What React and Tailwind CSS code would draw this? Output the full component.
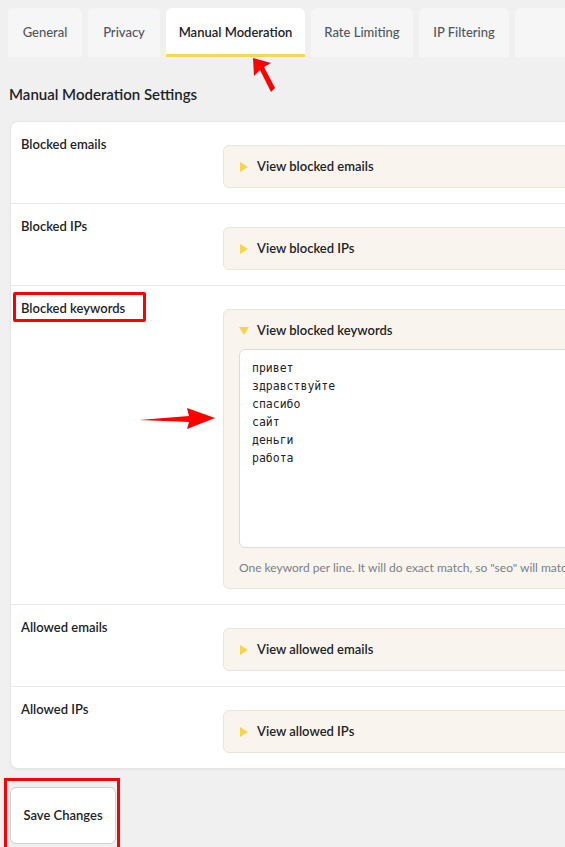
import React from "react";

const tabs = [
    { label: "General", w: "w-[74px]" },
    { label: "Privacy", w: "w-[72px]" },
    { label: "Manual Moderation", w: "w-[139px]", active: true },
    { label: "Rate Limiting", w: "w-[102px]" },
    { label: "IP Filtering", w: "w-[90px]" },
];

const keywords = ["привет", "здравствуйте", "спасибо", "сайт", "деньги", "работа"];

function Triangle({ open }) {
    return (
        <svg width="10" height="10" viewBox="0 0 10 10" className="shrink-0">
            {open ? <path d="M0 1 L10 1 L5 9 Z" fill="#f7d44c" /> : <path d="M1 0 L9 5 L1 10 Z" fill="#f7d44c" />}
        </svg>
    );
}

function Row({ label, summary, open, highlight, last, children }) {
    return (
        <div className={`flex ${last ? "" : "border-b border-[#e8e8e8]"}`}>
            <div className="w-[212px] shrink-0 pl-[10px] pt-[9px]">
                <span className="relative inline-block text-[13px] font-semibold text-[#1d2327]">
                    {label}
                    {highlight && (
                        <span className="absolute -left-[8px] -top-[7px] w-[133px] h-[30px] border-[3px] border-[#ff0000] rounded-[2px]"></span>
                    )}
                </span>
            </div>
            <div className="flex-1 pt-[23px] pb-[15px] pr-[10px]">
                <div className="bg-[#f9f5ee] border border-[#ebe5d9] rounded-[6px]">
                    <div className="flex items-center gap-[8px] pl-[15px] h-[41px] text-[13px] font-semibold text-[#1d2327]">
                        <Triangle open={open} />
                        <span>{summary}</span>
                    </div>
                    {children}
                </div>
            </div>
        </div>
    );
}

export default function App() {
    return (
        <div className="w-[565px] min-h-[847px] overflow-hidden bg-[#f0f0f1] relative" style={{ fontFamily: "Lato, 'Noto Sans', sans-serif" }}>
            <div className="w-[900px] pl-[8px] pt-[8px]">
                {/* Tabs */}
                <div className="flex gap-[6px]">
                    {tabs.map((t) => (
                        <div
                            key={t.label}
                            className={`${t.w} h-[49px] flex items-center justify-center rounded-t-[6px] text-[13px] ${
                                t.active
                                    ? "bg-white text-[#1d2327] font-semibold border-b-[3px] border-[#f9d653] pt-[3px]"
                                    : "bg-[#f6f6f6] text-[#50575e] font-medium"
                            }`}
                        >
                            {t.label}
                        </div>
                    ))}
                    <div className="w-[100px] h-[49px] rounded-t-[6px] bg-[#f6f6f6]"></div>
                </div>

                <h2 className="mt-[27px] pl-[1px] text-[15px] font-semibold text-[#1d2327] leading-[20px]">
                    Manual Moderation Settings
                </h2>

                {/* Settings card */}
                <div className="mt-[17px] ml-[2px] w-[780px] bg-white rounded-[8px] border border-[#e6e6e6] shadow-[0_1px_2px_rgba(0,0,0,0.04)]">
                    <Row label="Blocked emails" summary="View blocked emails" />
                    <Row label="Blocked IPs" summary="View blocked IPs" />
                    <Row label="Blocked keywords" summary="View blocked keywords" open highlight>
                        <div className="px-[15px] -mt-[2px] pb-[11px]">
                            <div className="h-[199px] bg-white border border-[#dcdcde] rounded-[6px] pl-[12px] pt-[9px] text-[11.5px] leading-[18px] text-[#1d2327]" style={{ fontFamily: "'DejaVu Sans Mono', monospace" }}>
                                {keywords.map((k) => (
                                    <div key={k}>{k}</div>
                                ))}
                            </div>
                            <p className="mt-[11px] text-[12px] text-[#7a7f85] whitespace-nowrap">
                                One keyword per line. It will do exact match, so "seo" will match "seo" but not "seos".
                            </p>
                        </div>
                    </Row>
                    <Row label="Allowed emails" summary="View allowed emails" />
                    <Row label="Allowed IPs" summary="View allowed IPs" last />
                </div>

                {/* Save */}
                <div className="mt-[18px] ml-[2px] relative w-[106px]">
                    <button className="w-[106px] h-[57px] bg-white border border-[#cfcfcf] rounded-[6px] text-[13px] font-semibold text-[#1d2327]">
                        Save Changes
                    </button>
                    <span className="absolute -left-[6px] -top-[9px] w-[116px] h-[80px] border-[3px] border-[#ff0000]"></span>
                </div>
            </div>

            {/* Annotation arrows */}
            <svg className="absolute left-[245px] top-[55px]" width="36" height="42" viewBox="0 0 36 42">
                <path d="M8 3 L26 8 L19 12 L30 33 L26 37 L15 15 L9 21 Z" fill="#ff0000" />
            </svg>
            <svg className="absolute left-[136px] top-[405px]" width="82" height="28" viewBox="0 0 82 28">
                <path d="M3 15 L53 11 L51 3 L79 13 L51 24 L53 17 Z" fill="#ff0000" />
            </svg>
        </div>
    );
}
